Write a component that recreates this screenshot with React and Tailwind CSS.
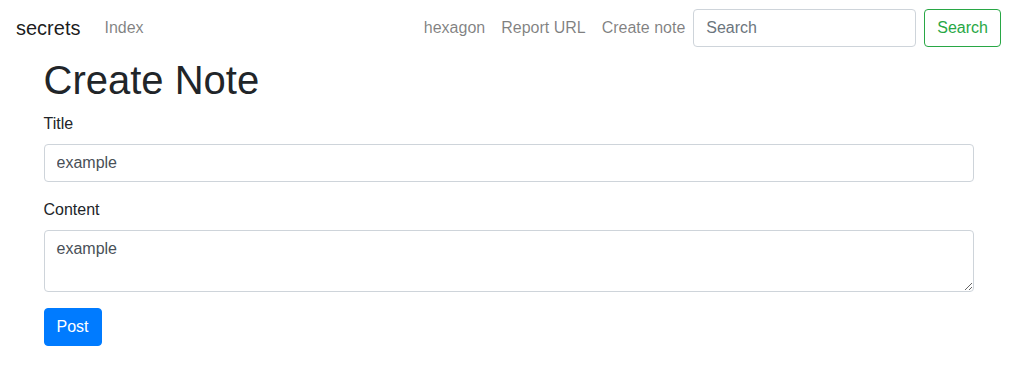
import React from "react";

const navLinks = ["hexagon", "Report URL", "Create note"];

export default function App() {
  return (
    <div className="min-h-screen bg-white text-[#212529] font-['Liberation_Sans',Arial,sans-serif] text-base leading-6">
      {/* Navbar */}
      <nav className="flex items-center px-4 py-2">
        <a className="text-[20px] leading-[30px] py-[5px] mr-4 text-black/90">secrets</a>
        <ul className="flex">
          <li>
            <a className="block p-2 text-black/50">Index</a>
          </li>
        </ul>
        <div className="ml-auto flex items-center">
          <ul className="flex">
            {navLinks.map((l) => (
              <li key={l}>
                <a className="block p-2 text-black/50">{l}</a>
              </li>
            ))}
          </ul>
          <form className="flex items-center" onSubmit={(e) => e.preventDefault()}>
            <input
              type="search"
              placeholder="Search"
              className="w-[223px] h-[38px] px-3 py-1.5 mr-2 border border-[#ced4da] rounded text-[#495057] placeholder:text-[#6c757d] outline-none"
            />
            <button className="h-[38px] px-3 border border-[#28a745] rounded text-[#28a745]">
              Search
            </button>
          </form>
        </div>
      </nav>

      {/* Main container */}
      <div className="w-[960px] mx-auto px-[15px]">
        <h1 className="text-[40px] leading-[48px] font-medium mb-2">Create Note</h1>
        <form onSubmit={(e) => e.preventDefault()}>
          <div className="mb-4">
            <label className="block mb-2">Title</label>
            <input
              defaultValue="example"
              className="block w-full h-[38px] px-3 py-1.5 border border-[#ced4da] rounded text-[#495057] outline-none"
            />
          </div>
          <div className="mb-4">
            <label className="block mb-2">Content</label>
            <textarea
              rows={2}
              defaultValue="example"
              className="block w-full px-3 py-1.5 border border-[#ced4da] rounded text-[#495057] outline-none leading-6"
            />
          </div>
          <button className="h-[38px] px-3 border border-[#007bff] bg-[#007bff] rounded text-white">
            Post
          </button>
        </form>
      </div>
    </div>
  );
}
